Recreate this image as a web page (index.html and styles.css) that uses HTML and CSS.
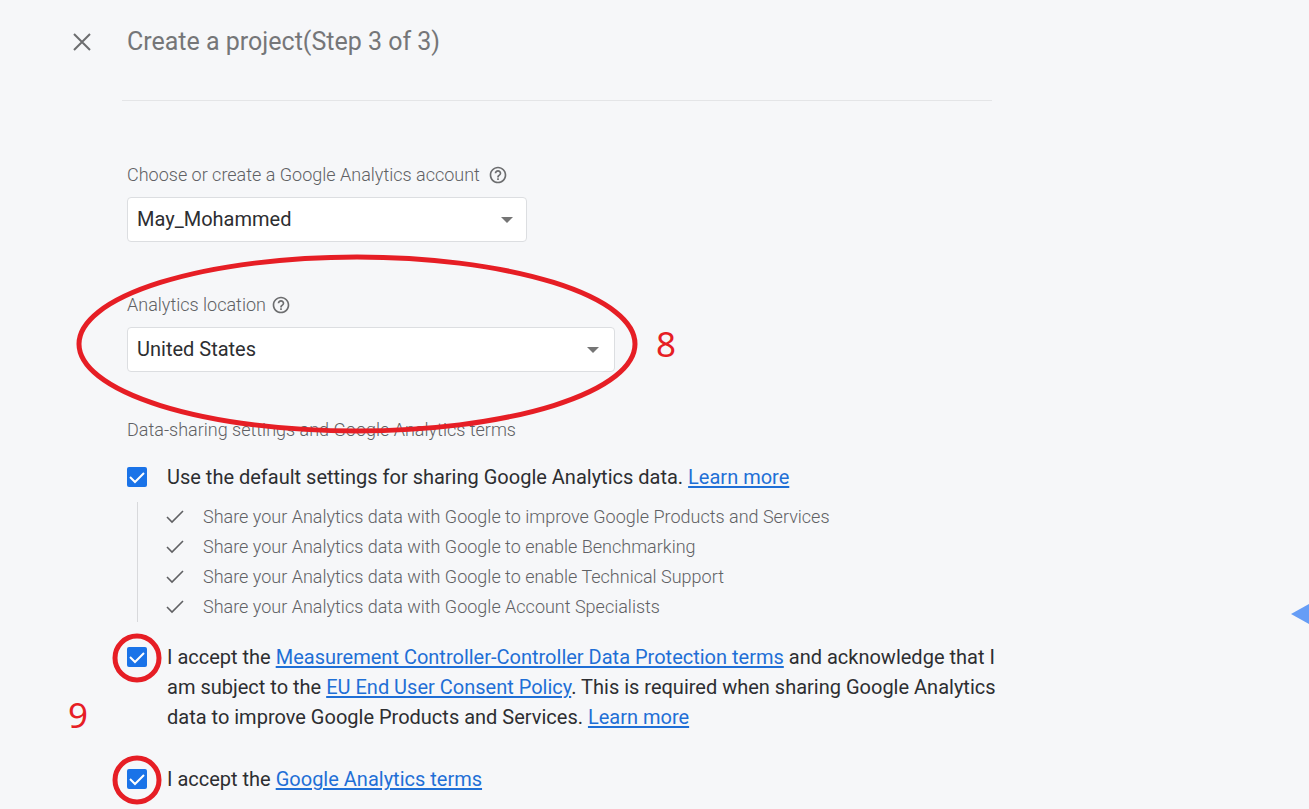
FILE: index.html
```html
<!DOCTYPE html>
<html lang="en">
<head>
<meta charset="utf-8">
<title>Create a project</title>
<link rel="stylesheet" href="styles.css">
</head>
<body>
<div class="page">
  <header class="header">
    <button class="close" type="button" aria-label="Close">
      <svg viewBox="0 0 18 18" width="18" height="18"><path d="M1 1l16 16M17 1L1 17" fill="none" stroke="currentColor" stroke-width="2"/></svg>
    </button>
    <h1 class="title">Create a project(Step 3 of 3)</h1>
  </header>
  <hr class="divider">
  <main class="form">
    <section class="field">
      <div class="field-label">
        <label for="account">Choose or create a Google Analytics account</label>
        <button class="help" type="button" aria-label="About accounts">
          <svg viewBox="0 0 24 24" width="20" height="20"><path fill="currentColor" d="M11 18h2v-2h-2v2zm1-16C6.480 2 2 6.480 2 12s4.480 10 10 10 10-4.480 10-10S17.520 2 12 2zm0 18c-4.410 0-8-3.590-8-8s3.590-8 8-8 8 3.590 8 8-3.590 8-8 8zm0-14c-2.210 0-4 1.790-4 4h2c0-1.100.9-2 2-2s2 .9 2 2c0 2-3 1.750-3 5h2c0-2.250 3-2.500 3-5 0-2.210-1.790-4-4-4z"/></svg>
        </button>
      </div>
      <div class="select-box account-box">
        <select id="account" class="select"><option>May_Mohammed</option></select>
        <svg class="arrow" viewBox="0 0 12 6" width="12" height="6"><path d="M0 0h12L6 6z" fill="currentColor"/></svg>
      </div>
    </section>
    <section class="field location">
      <div class="field-label">
        <label for="location">Analytics location</label>
        <button class="help" type="button" aria-label="About location">
          <svg viewBox="0 0 24 24" width="20" height="20"><path fill="currentColor" d="M11 18h2v-2h-2v2zm1-16C6.480 2 2 6.480 2 12s4.480 10 10 10 10-4.480 10-10S17.520 2 12 2zm0 18c-4.410 0-8-3.590-8-8s3.590-8 8-8 8 3.590 8 8-3.590 8-8 8zm0-14c-2.210 0-4 1.790-4 4h2c0-1.100.9-2 2-2s2 .9 2 2c0 2-3 1.750-3 5h2c0-2.250 3-2.500 3-5 0-2.210-1.790-4-4-4z"/></svg>
        </button>
      </div>
      <div class="select-box location-box">
        <select id="location" class="select"><option>United States</option></select>
        <svg class="arrow" viewBox="0 0 12 6" width="12" height="6"><path d="M0 0h12L6 6z" fill="currentColor"/></svg>
      </div>
      <svg class="mark oval" viewBox="0 0 562 180" width="562" height="180"><ellipse cx="281" cy="90" rx="278" ry="87" fill="none" stroke="currentColor" stroke-width="5"/></svg>
      <span class="mark step-eight">8</span>
    </section>
    <h2 class="section-title">Data-sharing settings and Google Analytics terms</h2>
    <div class="option">
      <span class="box"><input id="sharing" class="check" type="checkbox" checked><svg class="tick" viewBox="0 0 20 20" width="20" height="20"><path d="M3 10l5 5 9-9" fill="none" stroke="currentColor" stroke-width="2"/></svg></span>
      <p class="text"><label for="sharing">Use the default settings for sharing Google Analytics data.</label> <a class="link" href="#">Learn more</a></p>
    </div>
    <ul class="shares">
      <li class="share"><svg viewBox="0 0 18 14" width="18" height="14"><path d="M1 7l5 5L17 1" fill="none" stroke="currentColor" stroke-width="1.600"/></svg>Share your Analytics data with Google to improve Google Products and Services</li>
      <li class="share"><svg viewBox="0 0 18 14" width="18" height="14"><path d="M1 7l5 5L17 1" fill="none" stroke="currentColor" stroke-width="1.600"/></svg>Share your Analytics data with Google to enable Benchmarking</li>
      <li class="share"><svg viewBox="0 0 18 14" width="18" height="14"><path d="M1 7l5 5L17 1" fill="none" stroke="currentColor" stroke-width="1.600"/></svg>Share your Analytics data with Google to enable Technical Support</li>
      <li class="share"><svg viewBox="0 0 18 14" width="18" height="14"><path d="M1 7l5 5L17 1" fill="none" stroke="currentColor" stroke-width="1.600"/></svg>Share your Analytics data with Google Account Specialists</li>
    </ul>
    <div class="option">
      <span class="box"><input id="protection" class="check" type="checkbox" checked aria-labelledby="protection-text"><svg class="tick" viewBox="0 0 20 20" width="20" height="20"><path d="M3 10l5 5 9-9" fill="none" stroke="currentColor" stroke-width="2"/></svg><svg class="mark ring" viewBox="0 0 50 50" width="50" height="50"><circle cx="25" cy="25" r="22" fill="none" stroke="currentColor" stroke-width="5"/></svg></span>
      <p class="text" id="protection-text"><label for="protection">I accept the</label> <a class="link" href="#">Measurement Controller-Controller Data Protection terms</a> and acknowledge that I am subject to the <a class="link" href="#">EU End User Consent Policy</a>. This is required when sharing Google Analytics data to improve Google Products and Services. <a class="link" href="#">Learn more</a></p>
      <span class="mark step-nine">9</span>
    </div>
    <div class="option last">
      <span class="box"><input id="terms" class="check" type="checkbox" checked aria-labelledby="terms-text"><svg class="tick" viewBox="0 0 20 20" width="20" height="20"><path d="M3 10l5 5 9-9" fill="none" stroke="currentColor" stroke-width="2"/></svg><svg class="mark ring" viewBox="0 0 50 50" width="50" height="50"><circle cx="25" cy="25" r="22" fill="none" stroke="currentColor" stroke-width="5"/></svg></span>
      <p class="text" id="terms-text"><label for="terms">I accept the</label> <a class="link" href="#">Google Analytics terms</a></p>
    </div>
  </main>
  <svg class="corner" viewBox="0 0 18 20" width="18" height="20"><path d="M0 10L18 0v20z" fill="#669df6"/></svg>
</div>
</body>
</html>
```
FILE: styles.css
```css
* { box-sizing: border-box; }

body {
  margin: 0;
  background: #f6f7f9;
  color: #2d2e31;
  font-family: Roboto, "Liberation Sans", sans-serif;
  font-size: 20px;
  line-height: 30px;
}

.page {
  position: relative;
  min-height: 100vh;
  padding: 24px 24px 0 72px;
  overflow: hidden;
}

.header { display: flex; align-items: center; gap: 35px; height: 36px; }

.close, .help {
  display: flex;
  align-items: center;
  justify-content: center;
  padding: 0;
  border: 0;
  background: none;
  color: #6c6d6f;
  cursor: pointer;
}
.close { width: 20px; height: 20px; }

.title { margin: 0; font-size: 25px; font-weight: 400; color: #757678; }

.divider {
  max-width: 870px;
  margin: 40px 0 0 50px;
  border: 0;
  border-top: 1px solid #e4e5e7;
}

.form { max-width: 872px; margin: 59px 0 0 55px; }

.field { position: relative; margin-bottom: 48px; }
.location { margin-bottom: 43px; }

.field-label {
  display: flex;
  align-items: center;
  gap: 8px;
  height: 30px;
  margin-bottom: 7px;
  font-size: 18px;
  font-weight: 300;
  color: #606164;
}
.location .field-label { gap: 5px; }

.select-box { position: relative; height: 45px; }
.account-box { max-width: 400px; }
.location-box { max-width: 488px; }

.select {
  appearance: none;
  width: 100%;
  height: 100%;
  padding: 0 40px 2px 9px;
  border: 1px solid #dcdee1;
  border-radius: 4px;
  background: #fff;
  color: #2d2e31;
  font: inherit;
}

.arrow {
  position: absolute;
  top: 20px;
  right: 14px;
  color: #757575;
  pointer-events: none;
}
.location .arrow { right: 16px; }

.section-title {
  margin: 0 0 17px;
  font-size: 18px;
  font-weight: 300;
  color: #606164;
}

.option { position: relative; display: flex; gap: 20px; }
.text { margin: 0; flex: 1; }
.link { color: #1f6fd6; text-underline-offset: 2px; }

.box { position: relative; width: 20px; height: 20px; margin-top: 5px; }
.check {
  appearance: none;
  display: block;
  width: 20px;
  height: 20px;
  margin: 0;
  border-radius: 2px;
  background: #1a73e8;
}
.tick { position: absolute; inset: 0; color: #fff; pointer-events: none; }

.shares {
  margin: 10px 0 20px 10px;
  padding: 0 0 0 28px;
  border-left: 1px solid #d8d9dc;
  list-style: none;
  font-size: 18px;
  font-weight: 300;
  color: #606164;
}
.share { display: flex; align-items: center; gap: 19px; }

.last { margin-top: 32px; }

.mark { position: absolute; color: #e61e25; pointer-events: none; }
.oval { top: -36px; left: -51px; }
.ring { top: -14px; left: -15px; }
.step-eight, .step-nine {
  font-family: "Noto Sans", "Open Sans", sans-serif;
  font-size: 35px;
  line-height: 40px;
}
.step-eight { top: 34px; left: 529px; }
.step-nine { top: 53px; left: -59px; }

.corner { position: absolute; top: 604px; right: 0; }
```
